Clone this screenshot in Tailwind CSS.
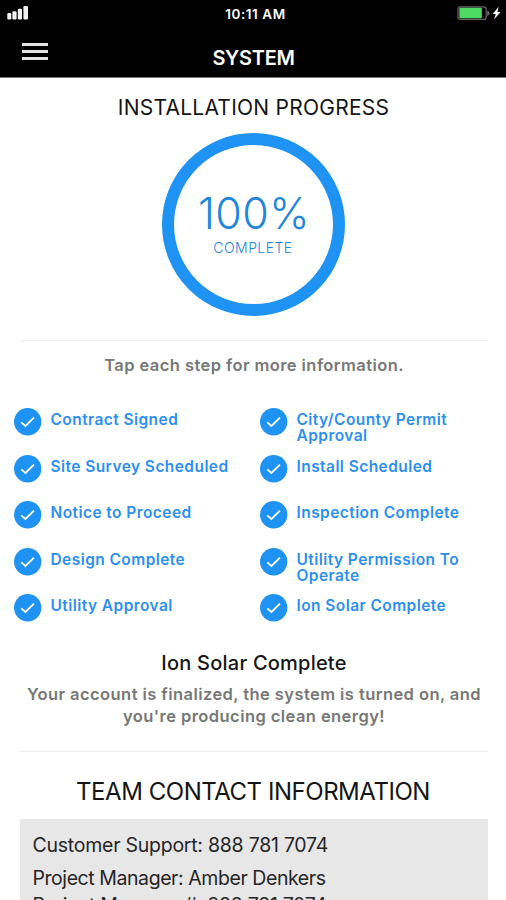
<!DOCTYPE html>
<html lang="en">
<head>
<meta charset="utf-8">
<title>System</title>
<script src="https://cdn.jsdelivr.net/npm/@tailwindcss/browser@4"></script>
</head>
<body class="h-[900px] w-[506px] overflow-hidden bg-white font-['Inter','Liberation_Sans',sans-serif] text-[#151515]">
<svg class="hidden">
  <symbol id="check" viewBox="0 0 28 28"><circle cx="13.7" cy="13.7" r="13.7" fill="#1e93f3"/><path d="M7.3 14.3 11.4 18 20 9.6" fill="none" stroke="#fff" stroke-width="1.8"/></symbol>
</svg>
<header class="h-[78px] border-b border-[#777] bg-black text-white">
  <div class="grid h-7 grid-cols-3 items-center pr-1 pl-[7px]">
    <svg class="h-4 w-[22px]" viewBox="0 0 22 16" fill="#f2f2f2"><rect x=".3" y="7" width="4" height="6.4" rx="1.2"/><rect x="5.4" y="5.2" width="4.2" height="8.2" rx="1.2"/><rect x="10.8" y="2.8" width="4.2" height="10.6" rx="1.2"/><rect x="16.4" y="0" width="4.6" height="13.4" rx="1.2"/></svg>
    <span class="pl-[2px] text-center text-[13.5px] leading-[26px] font-semibold tracking-[0.55px] whitespace-nowrap">10:11 AM</span>
    <svg class="h-4 w-12 justify-self-end" viewBox="0 0 48 16"><rect x="4" y=".8" width="28.2" height="12.6" rx="2.2" fill="none" stroke="#666" stroke-width="1.2"/><rect x="5.4" y="1.8" width="22.4" height="10.4" rx=".8" fill="#4cd964"/><path d="M33.3 4.6v5.4q2-1 2-2.7T33.3 4.6z" fill="#777"/><path d="M44.6.8 38.6 8h3.2L40 13.4l6.6-7.4h-3.2z" fill="#fff"/></svg>
  </div>
  <div class="grid h-[49px] grid-cols-[60px_1fr_60px]">
    <div class="mt-[15px] ml-[21.5px] flex flex-col gap-[4px]">
      <i class="h-[3px] w-[26.5px] bg-[#e4e4e4]"></i><i class="h-[3px] w-[26.5px] bg-[#e4e4e4]"></i><i class="h-[2.5px] w-[26.5px] bg-[#e4e4e4]"></i>
    </div>
    <h1 class="mt-[15px] pl-px text-center text-[20px] leading-[30px] font-semibold tracking-[-0.3px]"><span>SYSTEM</span></h1>
  </div>
</header>
<main>
  <h2 class="mt-[15px] pl-[1px] text-center text-[21px] leading-[30px] tracking-[0.24px]"><span>INSTALLATION PROGRESS</span></h2>
  <div class="mx-auto mt-[9.5px] flex h-[183px] w-[183px] flex-col items-center rounded-full border-[12px] border-[#1e93f3] text-[#1f86dc]">
    <span class="mt-[43px] pl-[2px] text-[43px] leading-[50px] font-light tracking-[0.4px]">100%</span>
    <span class="text-[14px] leading-5 font-light tracking-[0.45px]">COMPLETE</span>
  </div>
  <section class="mr-[18px] ml-5 mt-[24.5px] border-t border-[#ececec] pt-[13px] text-center text-[16.5px] leading-[22px] font-semibold tracking-[0.43px] text-[#777]"><span>Tap each step for more information.</span></section>
  <ul class="mt-8 ml-[14px] grid h-[222px] auto-rows-[46.5px] grid-cols-[246px_1fr] text-[15.5px] leading-4 font-semibold tracking-[0.43px] text-[#2c8ff0]">
    <li class="flex gap-[8.5px]"><svg class="size-7 shrink-0"><use href="#check"/></svg><span class="pt-1">Contract Signed</span></li>
    <li class="flex gap-[8.5px]"><svg class="size-7 shrink-0"><use href="#check"/></svg><span class="pt-1">City/County Permit<br>Approval</span></li>
    <li class="flex gap-[8.5px]"><svg class="size-7 shrink-0"><use href="#check"/></svg><span class="pt-1">Site Survey Scheduled</span></li>
    <li class="flex gap-[8.5px]"><svg class="size-7 shrink-0"><use href="#check"/></svg><span class="pt-1">Install Scheduled</span></li>
    <li class="flex gap-[8.5px]"><svg class="size-7 shrink-0"><use href="#check"/></svg><span class="pt-1">Notice to Proceed</span></li>
    <li class="flex gap-[8.5px]"><svg class="size-7 shrink-0"><use href="#check"/></svg><span class="pt-1">Inspection Complete</span></li>
    <li class="flex gap-[8.5px]"><svg class="size-7 shrink-0"><use href="#check"/></svg><span class="pt-1">Design Complete</span></li>
    <li class="flex gap-[8.5px]"><svg class="size-7 shrink-0"><use href="#check"/></svg><span class="pt-1">Utility Permission To<br>Operate</span></li>
    <li class="flex gap-[8.5px]"><svg class="size-7 shrink-0"><use href="#check"/></svg><span class="pt-1">Utility Approval</span></li>
    <li class="flex gap-[8.5px]"><svg class="size-7 shrink-0"><use href="#check"/></svg><span class="pt-1">Ion Solar Complete</span></li>
  </ul>
  <section class="mr-[18px] ml-5 mt-[10px] h-[112px] border-b border-[#ececec] text-center">
    <h3 class="pt-[9px] text-[20px] leading-[28px] font-medium tracking-[0.22px]"><span>Ion Solar Complete</span></h3>
    <p class="mt-[6px] text-[16.5px] leading-[22px] font-semibold tracking-[0.43px] whitespace-nowrap text-[#777]"><span>Your account is finalized, the system is turned on, and</span><br><span>you're producing clean energy!</span></p>
  </section>
  <h2 class="mt-[24px] text-center text-[24px] leading-[32px] tracking-[-0.46px]"><span>TEAM CONTACT INFORMATION</span></h2>
  <section class="mr-[18px] ml-5 mt-[11px] h-[90px] bg-[#e7e7e7] pt-[10px] pl-[12.5px] text-[19.5px] tracking-[-0.25px] text-[#252525]">
    <p class="leading-[33px]"><span>Customer Support: 888 781 7074</span></p>
    <p class="leading-[33px] tracking-[-0.43px]"><span>Project Manager: Amber Denkers</span></p>
    <p class="-mt-[3px] leading-[26px] tracking-[-0.32px]"><span>Project Manager #: 888 781 7074</span></p>
  </section>
</main>
</body>
</html>
